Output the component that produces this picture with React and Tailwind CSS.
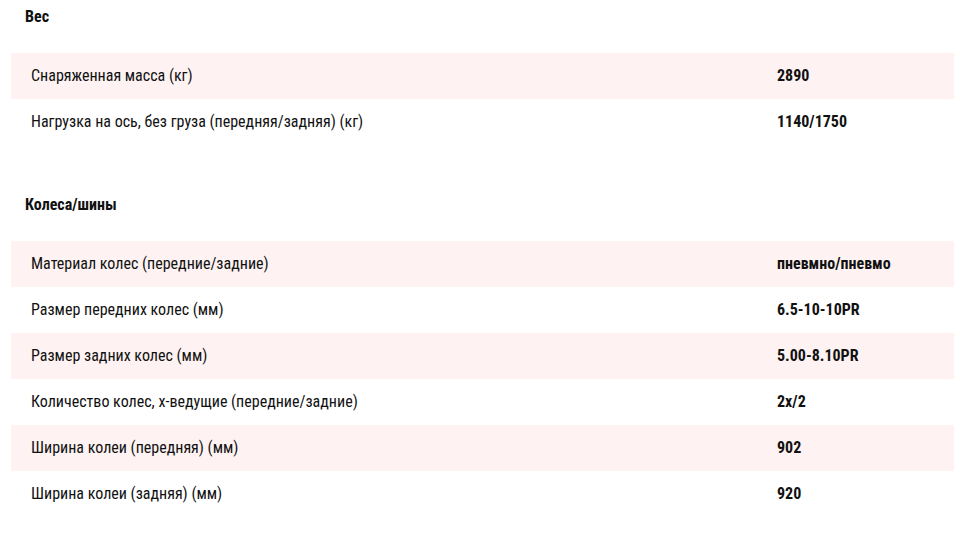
const sections = [
  {
    title: "Вес",
    rows: [
      ["Снаряженная масса (кг)", "2890"],
      ["Нагрузка на ось, без груза (передняя/задняя) (кг)", "1140/1750"],
    ],
  },
  {
    title: "Колеса/шины",
    rows: [
      ["Материал колес (передние/задние)", "пневмно/пневмо"],
      ["Размер передних колес (мм)", "6.5-10-10PR"],
      ["Размер задних колес (мм)", "5.00-8.10PR"],
      ["Количество колес, х-ведущие (передние/задние)", "2х/2"],
      ["Ширина колеи (передняя) (мм)", "902"],
      ["Ширина колеи (задняя) (мм)", "920"],
    ],
  },
];

export default function App() {
  return (
    <div className="w-[954px] h-[539px] bg-white pl-[11px] pt-[7px] text-[#111] overflow-hidden font-['Roboto_Condensed',Roboto,sans-serif]">
      {sections.map((section, si) => (
        <div key={si} className={si > 0 ? "mt-[50px]" : ""}>
          <h3 className="pl-[14px] h-[20px] leading-[20px] text-[16px] font-bold">
            {section.title}
          </h3>
          <div className="mt-[26px]">
            {section.rows.map((row, i) => (
              <div
                key={i}
                className={
                  "grid grid-cols-[746px_1fr] h-[46px] items-center text-[16px] " +
                  (i % 2 === 0 ? "bg-[#fef3f2]" : "bg-white")
                }
              >
                <div className="pl-[20px]">{row[0]}</div>
                <div className="pl-[20px] font-bold">{row[1]}</div>
              </div>
            ))}
          </div>
        </div>
      ))}
    </div>
  );
}
